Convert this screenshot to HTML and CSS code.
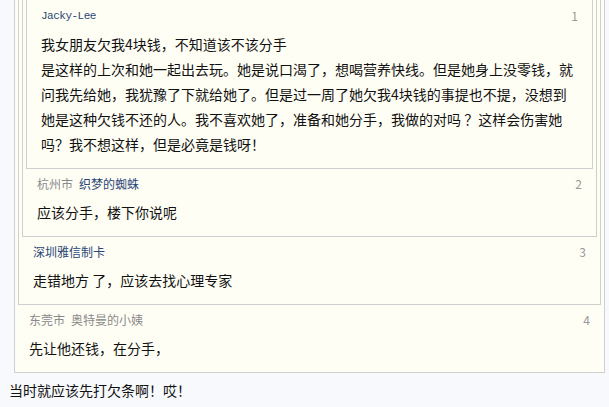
FILE: index.html
```html
<!DOCTYPE html>
<html lang="zh-CN">
<head>
    <meta charset="UTF-8">
    <meta name="viewport" content="width=device-width, initial-scale=1.0">
    <title>回复</title>
    <link rel="stylesheet" href="styles.css">
</head>
<body>
    <div class="post">
        <!-- quoted floors, nested: the oldest one is innermost -->
        <div class="floor outer">
            <div class="floor">
                <div class="floor">
                    <div class="floor">
                        <div class="floor-head">
                            <span class="user mono">Jacky-Lee</span>
                            <span class="num">1</span>
                        </div>
                        <div class="floor-body">我女朋友欠我4块钱，不知道该不该分手<br>是这样的上次和她一起出去玩。她是说口渴了，想喝营养快线。但是她身上没零钱，就问我先给她，我犹豫了下就给她了。但是过一周了她欠我4块钱的事提也不提，没想到她是这种欠钱不还的人。我不喜欢她了，准备和她分手，我做的对吗 ？这样会伤害她吗？我不想这样，但是必竟是钱呀！</div>
                    </div>
                    <div class="floor-head">
                        <span><span class="place">杭州市</span><span class="user">织梦的蜘蛛</span></span>
                        <span class="num">2</span>
                    </div>
                    <div class="floor-body">应该分手，楼下你说呢</div>
                </div>
                <div class="floor-head">
                    <span class="user">深圳雅信制卡</span>
                    <span class="num">3</span>
                </div>
                <div class="floor-body">走错地方 了，应该去找心理专家</div>
            </div>
            <div class="floor-head">
                <span><span class="place">东莞市</span><span class="place">奥特曼的小姨</span></span>
                <span class="num">4</span>
            </div>
            <div class="floor-body">先让他还钱，在分手，</div>
        </div>
        <div class="reply">当时就应该先打欠条啊！哎！</div>
    </div>
</body>
</html>
```

FILE: styles.css
```css
body {
    margin: 0;
    background-color: #f7f9fc;
    font-family: "Noto Sans CJK SC", "Noto Sans", sans-serif;
    color: #111;
    overflow: hidden;
}
.post {
    padding: 0 4px 0 9px;
}
.floor {
    border: 1px solid #cfcfcf;
    background-color: #fffef5;
    padding: 3px 3px 0;
}
.outer {
    margin: -15px 0 0 5px;
}
.floor-head {
    display: flex;
    justify-content: space-between;
    padding: 8px 11px 0;
    font-size: 12px;
    line-height: 14px;
}
.user {
    color: #2a4677;
}
.mono {
    font-family: "Liberation Mono", monospace;
    font-size: 11px;
    letter-spacing: -0.5px;
}
.place {
    color: #8a8a8a;
    margin-right: 6px;
}
.num {
    color: #999;
}
.floor-body {
    padding: 9px 11px 11px;
    font-size: 14px;
    line-height: 25px;
}
.reply {
    margin-top: 5px;
    font-size: 14px;
    line-height: 25px;
}
```
